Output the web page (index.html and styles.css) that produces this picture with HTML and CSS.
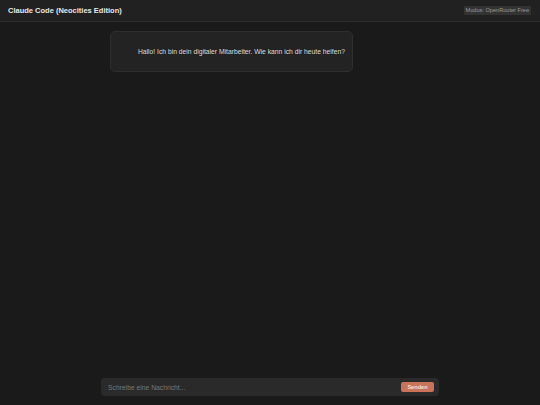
FILE: index.html
```html
<!DOCTYPE html>
<html lang="de">
<head>
<meta charset="utf-8">
<title>Claude Code (Neocities Edition)</title>
<link rel="stylesheet" href="styles.css">
</head>
<body>
<header class="topbar">
  <div class="title">Claude Code (Neocities Edition)</div>
  <div class="badge">Modus: OpenRouter Free</div>
</header>
<main class="chat">
  <div class="column">
    <div class="bubble">Hallo! Ich bin dein digitaler Mitarbeiter. Wie kann ich dir heute helfen?</div>
  </div>
</main>
<footer class="composer">
  <div class="inputbar">
    <span class="placeholder">Schreibe eine Nachricht...</span>
    <button class="send">Senden</button>
  </div>
</footer>
</body>
</html>
```
FILE: styles.css
```css
html, body {
  margin: 0;
  padding: 0;
  height: 100%;
}
body {
  background: #1a1a1a;
  color: #e6e6e6;
  font-family: "Liberation Sans", Arial, sans-serif;
  display: flex;
  flex-direction: column;
  height: 405px;
  overflow: hidden;
}
.topbar {
  height: 22px;
  box-sizing: border-box;
  background: #212121;
  border-bottom: 1px solid #2d2d2d;
  display: flex;
  align-items: center;
  justify-content: space-between;
  padding: 0 9px 0 8px;
}
.title {
  font-weight: bold;
  font-size: 7.5px;
  color: #e8e8e8;
}
.badge {
  font-size: 5.6px;
  color: #9a9a9a;
  background: #333333;
  padding: 2px 2px;
  border-radius: 1px;
  line-height: 5px;
}
.chat {
  flex: 1;
  display: flex;
  justify-content: center;
}
.column {
  width: 338px;
  box-sizing: border-box;
  padding: 9px 9px 0;
}
.bubble {
  width: 243px;
  height: 41px;
  box-sizing: border-box;
  background: #232323;
  border: 1px solid #2e2e2e;
  border-radius: 5px;
  display: flex;
  align-items: center;
  justify-content: flex-end;
  padding: 0 7px;
  font-size: 6.75px;
  color: #dcdcdc;
}
.composer {
  display: flex;
  justify-content: center;
  padding-bottom: 9px;
}
.inputbar {
  width: 338px;
  height: 18px;
  box-sizing: border-box;
  background: #2a2a2a;
  border-radius: 4px;
  display: flex;
  align-items: center;
  justify-content: space-between;
  padding: 0 5px 0 7px;
}
.placeholder {
  font-size: 6.75px;
  color: #777777;
}
.send {
  font-family: "Liberation Sans", Arial, sans-serif;
  font-weight: bold;
  font-size: 5.6px;
  color: #f4e2dc;
  background: #c8735a;
  border: none;
  border-radius: 2px;
  height: 10px;
  width: 33px;
  padding: 0;
  line-height: 10px;
}
```
